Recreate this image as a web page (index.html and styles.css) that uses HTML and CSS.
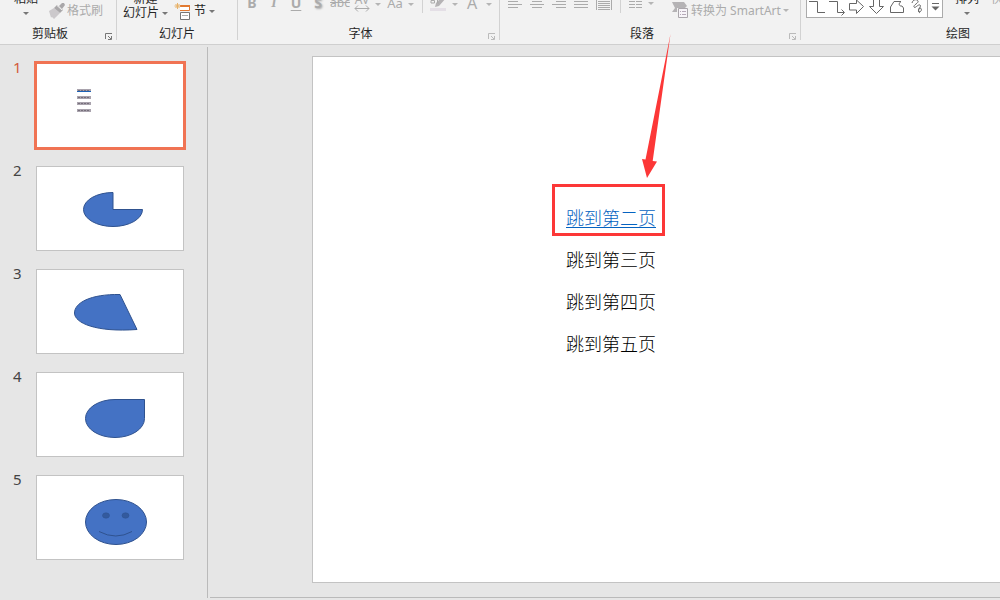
FILE: index.html
```html
<!DOCTYPE html>
<html lang="zh-CN">
<head>
<meta charset="utf-8">
<title>幻灯片</title>
<link rel="stylesheet" href="styles.css">
</head>
<body>
<header class="ribbon">
  <section class="group group-clipboard">
    <div class="tools">
      <button class="big"><span>粘贴</span><i class="caret"></i></button>
      <button class="wide off painter">
        <svg width="18" height="18" viewBox="0 0 18 18"><path d="M1 9 6 6l6 5-6 6-2-2-1 .5z" fill="#ccc9cc"/><path d="m6 6 3-3 6 5-3 3z" fill="#a9a7a9"/><path d="m11 4 3-3h2l1 2-3 4z" fill="#a9a7a9"/><path d="M9 3.500 14 8" stroke="#f2f2f2"/></svg>
        <span>格式刷</span>
      </button>
    </div>
    <footer class="foot"><span>剪贴板</span><button class="launch" aria-label="剪贴板选项"><svg width="7" height="7" viewBox="0 0 7 7"><path d="M.5 6V.5H7M3 3l3 3M6.500 3v3.500H3" fill="none" stroke="currentColor"/></svg></button></footer>
  </section>

  <section class="group group-slides">
    <div class="tools">
      <button class="big"><span>新建</span><span class="row">幻灯片<i class="caret"></i></span></button>
      <button class="wide section">
        <svg width="17" height="18" viewBox="0 0 17 18"><path d="M6 4.500h9.500v4H6" fill="#fff" stroke="#e27a32"/><path d="M6 4h10" stroke="#e27a32" stroke-width="2"/><path d="M6.500 10.500h9v7h-9z" fill="#fff" stroke="#777"/><path d="M8 13.500h6" stroke="#aaa"/><path d="M3.500 1v6M.5 4h6M1.500 2l4 4M5.500 2l-4 4" stroke="#e8b269"/></svg>
        <span>节</span><i class="caret"></i>
      </button>
    </div>
    <footer class="foot plain"><span>幻灯片</span></footer>
  </section>

  <section class="group group-font">
    <div class="tools off letters">
      <button class="key bold">B</button>
      <button class="key italic">I</button>
      <button class="key bold under">U</button>
      <button class="key bold shade">S</button>
      <button class="key strike">abc</button>
      <button class="key kern"><span>AV</span><svg width="16" height="7" viewBox="0 0 16 7"><path d="M1 3.500h14M4 .5l-3 3 3 3M12 .5l3 3-3 3" fill="none" stroke="currentColor"/></svg></button>
      <i class="caret"></i>
      <button class="key case">Aa</button>
      <i class="caret"></i>
      <i class="rule"></i>
      <button class="key pen" aria-label="突出显示"><svg width="17" height="16" viewBox="0 0 17 16"><path d="M0 13h16v3H0z" fill="#e4dfe6"/><path d="m5 12 1-4 7-7h3v2l-7 8z" fill="#b5b3b5"/><path d="M1 5.500h3.500V8H1zM7.500 1v7H9" fill="none" stroke="#aaa"/></svg></button>
      <i class="caret"></i>
      <button class="key ink">A</button>
      <i class="caret"></i>
    </div>
    <footer class="foot"><span>字体</span><button class="launch dim" aria-label="字体选项"><svg width="7" height="7" viewBox="0 0 7 7"><path d="M.5 6V.5H7M3 3l3 3M6.500 3v3.500H3" fill="none" stroke="currentColor"/></svg></button></footer>
  </section>

  <section class="group group-para">
    <div class="tools off">
      <div class="aligns">
        <button aria-label="左对齐"><svg width="14" height="10" viewBox="0 0 14 10"><path d="M0 1.500h10M0 4.500h14M0 7.500h10" stroke="currentColor"/></svg></button>
        <button aria-label="居中"><svg width="14" height="10" viewBox="0 0 14 10"><path d="M2 1.500h10M0 4.500h14M2 7.500h10" stroke="currentColor"/></svg></button>
        <button aria-label="右对齐"><svg width="14" height="10" viewBox="0 0 14 10"><path d="M4 1.500h10M0 4.500h14M4 7.500h10" stroke="currentColor"/></svg></button>
        <button aria-label="两端对齐"><svg width="14" height="10" viewBox="0 0 14 10"><path d="M0 1.500h14M0 4.500h14M0 7.500h14" stroke="currentColor"/></svg></button>
        <button aria-label="分散对齐"><svg width="16" height="10" viewBox="0 0 16 10"><path d="M.5 0v10M15.500 0v10M2 1.500h12M2 3.500h12M2 5.500h12M2 7.500h12M2 9.500h12" stroke="currentColor"/></svg></button>
      </div>
      <i class="rule"></i>
      <button class="cols" aria-label="分栏"><svg width="13" height="10" viewBox="0 0 13 10"><path d="M0 1.500h6M7 1.500h6M0 4.500h6M7 4.500h6M0 7.500h6M7 7.500h6" stroke="currentColor"/></svg><i class="caret"></i></button>
      <button class="wide smart">
        <svg width="17" height="17" viewBox="0 0 17 17"><path d="M0 0h12l3 4-2 2H5v4H0l3-4z" fill="#b5b3b5"/><path d="M6.500 6.500h9v9h-9z" fill="#f7f4f8" stroke="#aaa6ab"/><path d="M8 9.500h1M10 9.500h4M8 12.500h1M10 12.500h4" stroke="#b5a9b8"/></svg>
        <span>转换为 SmartArt</span><i class="caret"></i>
      </button>
    </div>
    <footer class="foot"><span>段落</span><button class="launch dim" aria-label="段落选项"><svg width="7" height="7" viewBox="0 0 7 7"><path d="M.5 6V.5H7M3 3l3 3M6.500 3v3.500H3" fill="none" stroke="currentColor"/></svg></button></footer>
  </section>

  <section class="group group-draw">
    <div class="tools">
      <div class="gallery">
        <button aria-label="肘形连接符"><svg viewBox="0 0 20 17"><path d="M2 1.500h8.500v11H18"/></svg></button>
        <button aria-label="肘形箭头"><svg viewBox="0 0 20 17"><path d="M2 1.500h8.500v11H17M14.500 9.500l3 3-3 3"/></svg></button>
        <button aria-label="右箭头"><svg viewBox="0 0 20 17"><path d="M2.500 3.500h7V0l7 6.500-7 7V10h-7z"/></svg></button>
        <button aria-label="下箭头"><svg viewBox="0 0 20 17"><path d="M6.500-2v8.500h-4l7 7 7-7h-4V-2"/></svg></button>
        <button aria-label="任意多边形"><svg viewBox="0 0 20 17"><path d="M7 1.500h7c-3 2-2 5 1 4.500l1.500 2v4.500h-13V7z"/></svg></button>
        <button aria-label="曲线"><svg viewBox="0 0 20 17"><path d="M5 3c1-4 5-4 6-2s-5 4-4 6 4-3 6-2-3 5-1 7c3 0 3-4 1-4s-2 4 0 5"/></svg></button>
        <button class="more" aria-label="更多形状"><svg viewBox="0 0 14 17"><path d="M4 3.500h7"/><path d="M3.500 6.500h8l-4 4z" fill="#666" stroke="none"/></svg></button>
      </div>
      <button class="big"><span>排列</span><i class="caret"></i></button>
      <button class="big off quick"><span>快速样式</span></button>
    </div>
    <footer class="foot"><span>绘图</span><button class="launch" aria-label="绘图选项"></button></footer>
  </section>
</header>

<main class="work">
  <nav class="panel" aria-label="幻灯片缩略图">
    <ol class="thumbs">
      <li class="thumb current"><span class="num">1</span>
        <a class="page" href="#s1"><svg viewBox="0 0 146 83"><path d="M40 26.500h14M40 33.500h14M40 39.500h14M40 46.500h14" stroke="#a9a3ad" stroke-width="3"/><path d="M41 26.500h12M41 33.500h12M41 39.500h12M41 46.500h12" stroke="#77707c" stroke-dasharray="2 1"/><path d="M40 27.500h14" stroke="#1c62b8"/></svg></a></li>
      <li class="thumb"><span class="num">2</span>
        <a class="page" href="#s2"><svg viewBox="0 0 146 83"><path class="shape" d="M76 25.500A29.500 17 0 1 0 105.500 42.500H76z"/></svg></a></li>
      <li class="thumb"><span class="num">3</span>
        <a class="page" href="#s3"><svg viewBox="0 0 146 83"><path class="shape" d="M83 24.500C53 24 37.500 33 37.500 43S59 62.500 100 59.500z"/></svg></a></li>
      <li class="thumb"><span class="num">4</span>
        <a class="page" href="#s4"><svg viewBox="0 0 146 83"><path class="shape" d="M78 26.500h29.500V45.500A29.500 19 0 1 1 78 26.500z"/></svg></a></li>
      <li class="thumb"><span class="num">5</span>
        <a class="page" href="#s5"><svg viewBox="0 0 146 83"><ellipse class="shape" cx="79" cy="46" rx="30.500" ry="22.500"/><g fill="#335a9e" stroke="#2f528f" stroke-width=".5"><ellipse cx="69" cy="39.500" rx="3.500" ry="2.700"/><ellipse cx="88.500" cy="39.500" rx="3.500" ry="2.700"/></g><path d="M62 55.500q17 9 33 0" fill="none" stroke="#2f528f"/></svg></a></li>
    </ol>
  </nav>
  <div class="editor">
    <article class="slide">
      <ul class="jumps">
        <li class="marked"><a href="#s2">跳到第二页</a>
          <svg class="arrow" width="32" height="146" viewBox="0 0 32 146"><path d="M30.500 2 5.500 127.500 2 127l5 19 10-16.500-4.300-.5z" fill="#fc3737"/></svg>
        </li>
        <li>跳到第三页</li>
        <li>跳到第四页</li>
        <li>跳到第五页</li>
      </ul>
    </article>
  </div>
</main>
</body>
</html>
```
FILE: styles.css
```css
*, *::before { box-sizing: border-box; }

body {
  margin: 0;
  height: 100vh;
  overflow: hidden;
  display: flex;
  flex-direction: column;
  background: #e6e6e6;
  color: #262626;
  font: 12px/16px "Noto Sans", "Noto Sans CJK SC", sans-serif;
}

button {
  margin: 0;
  padding: 0;
  border: 0;
  background: none;
  color: inherit;
  font: inherit;
}

svg { display: block; flex: none; }

/* Ribbon, scrolled partly under the top edge */
.ribbon {
  display: flex;
  flex: none;
  height: 61px;
  margin-top: -16px;
  overflow: hidden;
  background: #f2f2f2;
  border-bottom: 1px solid #cfcfcf;
}

.group {
  display: flex;
  flex-direction: column;
  flex: none;
  height: 56px;
  border-right: 1px solid #d2d2d2;
}
.group-clipboard { width: 117px; }
.group-slides { width: 121px; }
.group-font { width: 262px; }
.group-para { width: 301px; }
.group-draw { width: 331px; }

.tools {
  display: flex;
  align-items: flex-start;
  flex: none;
  height: 40px;
  white-space: nowrap;
}
.tools > * { flex: none; }
.off { color: #ababab; }

.foot { display: flex; line-height: 20px; }
.foot span { flex: 1; text-align: center; }
.launch {
  display: flex;
  align-items: flex-end;
  justify-content: flex-end;
  width: 16px;
  height: 16px;
  padding-right: 4px;
  color: #777;
}
.launch.dim { color: #bbb; }

.caret {
  flex: none;
  border: 3px solid transparent;
  border-top-color: #777;
  border-bottom: 0;
}
.off .caret { border-top-color: #b5b5b5; }

.rule {
  width: 1px;
  height: 29px;
  background: #d2d2d2;
}

.big {
  display: flex;
  flex-direction: column;
  align-items: center;
  padding-top: 7px;
}
.big > .caret { margin-top: 5px; }
.big .row { display: flex; align-items: center; gap: 3px; margin-top: -2px; }
.wide { display: flex; align-items: center; padding-top: 18px; gap: 3px; }

.group-clipboard .big { margin-left: 14px; }
.painter { margin-left: 10px; gap: 1px; }
.group-slides .big { margin-left: 6px; }
.section { margin-left: 6px; }

.letters { padding-left: 3px; font-size: 14px; line-height: 18px; }
.letters .key { width: 22px; height: 28px; padding-top: 9px; }
.letters > .caret { margin: 19px 0 0 2px; }
.bold { font-weight: 700; }
.letters .italic { font-family: "Liberation Serif", serif; font-style: italic; font-weight: 700; }
.under { text-decoration: underline; text-underline-offset: 2px; }
.shade { text-shadow: 1px 1px 2px #aaa; }
.letters .strike { font-size: 12px; text-decoration: line-through; }
.letters .kern {
  display: flex;
  flex-direction: column;
  align-items: center;
  font-size: 12px;
  line-height: 14px;
}
.kern svg { margin-top: -2px; }
.letters .case { width: 24px; margin-left: 2px; font-size: 13px; }
.letters .case + .caret { margin-left: 1px; }
.letters .rule { margin: 0 7px 0 8px; }
.letters .pen { width: 17px; padding-top: 10px; }
.letters .pen + .caret { margin-left: 5px; }
.letters .ink { width: 28px; font-size: 16px; }
.letters .ink + .caret { margin-left: 0; }

.aligns { display: flex; gap: 8px; margin-left: 8px; padding-top: 16px; }
.group-para .rule { margin-left: 8px; }
.cols { display: flex; gap: 6px; margin-left: 8px; padding-top: 16px; }
.cols .caret { margin-top: 2px; align-self: flex-start; }
.smart { margin-left: 18px; gap: 2px; }

.gallery {
  display: flex;
  height: 34px;
  margin-left: 5px;
  background: #fff;
  border: 1px solid #ababab;
}
.gallery button { width: 20px; padding-top: 15px; }
.gallery svg { width: 100%; height: 17px; fill: none; stroke: #666; }
.gallery .more { width: 15px; border-left: 1px solid #ababab; }
.group-draw .big { margin-left: 12px; }

/* Thumbnails and editing area */
.work { display: flex; flex: 1; min-height: 0; }

.panel {
  flex: none;
  width: 208px;
  margin: 2px 0;
  border-right: 1px solid #bababa;
}
.thumbs {
  display: flex;
  flex-direction: column;
  gap: 18px;
  margin: 0;
  padding: 16px 23px 0 13px;
  list-style: none;
}
.thumb { display: flex; gap: 14px; }
.num {
  width: 9px;
  color: #444;
  font-size: 15px;
  line-height: 8px;
}
.page {
  flex: 1;
  background: #fff;
  border: 1px solid #c3c3c3;
}
.page svg { width: 100%; }
.current .num { color: #d35c3c; }
.current .page { border-color: #fff; outline: 3px solid #f07353; outline-offset: -1px; }
.shape { fill: #4472c4; stroke: #2f528f; }

.editor {
  display: flex;
  flex: 1;
  margin: 0 0 2px 2px;
  padding: 11px 0 14px 102px;
  border-bottom: 1px solid #bababa;
}
.slide {
  flex: 1;
  padding: 140px 0 0 253px;
  background: #fff;
  border: 1px solid #c3c3c3;
  border-right: 0;
}
.jumps {
  margin: 0;
  padding: 0;
  color: #000;
  font-size: 18px;
  font-weight: 300;
  line-height: 42px;
  list-style: none;
}
.jumps a { color: #0563c1; text-underline-offset: 2px; text-decoration-thickness: 1px; }

/* Red frame and arrow drawn over the first line */
.marked { position: relative; }
.marked::before {
  content: "";
  position: absolute;
  left: -14px;
  top: -13px;
  width: 113px;
  height: 52px;
  border: 3px solid #fc3737;
  pointer-events: none;
}
.arrow { position: absolute; left: 74px; top: -165px; pointer-events: none; }
```
